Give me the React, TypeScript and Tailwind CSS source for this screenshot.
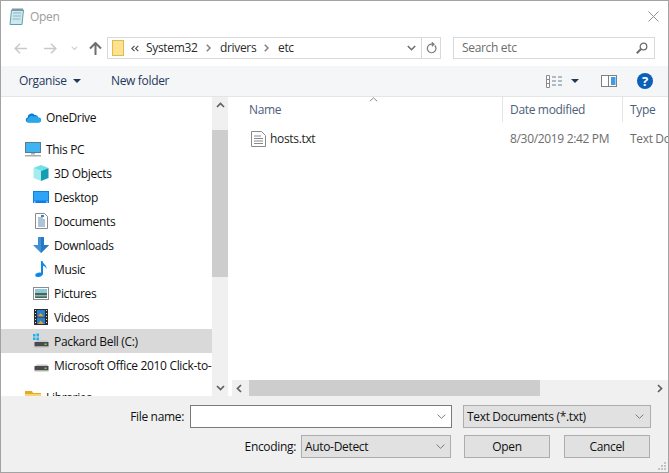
import React from "react";

const Row = ({ icon, label, indent, selected, mt }: { icon: React.ReactNode; label: string; indent: boolean; selected?: boolean; mt?: string }) => (
  <div className={`flex h-6 shrink-0 items-center whitespace-nowrap ${selected ? "bg-[#d9d9d9]" : ""} ${mt ?? ""} ${indent ? "pl-[32px]" : "pl-[24px]"}`}>
    <span className="flex h-4 w-4 shrink-0 items-center justify-center">{icon}</span>
    <span className="ml-[5px] pt-px">{label}</span>
  </div>
);

const Chevron = ({ className = "" }: { className?: string }) => (
  <svg width="9" height="5" viewBox="0 0 9 5" className={className}><path d="M.6.6 4.500 4.300 8.400.6" fill="none" stroke="#7a7a7a" strokeWidth="1" /></svg>
);

const Crumb = () => (
  <svg width="5" height="8" viewBox="0 0 5 8"><path d="M.8.8 4 4 .8 7.200" fill="none" stroke="#808080" strokeWidth="1.500" /></svg>
);

const OneDrive = () => (
  <svg width="16" height="11" viewBox="0 0 16 11"><path d="M3 10.500A2.600 2.600 0 0 1 2.600 5.400 4 4 0 0 1 9.600 3a3 3 0 0 1 3.600 2.600 2.500 2.500 0 0 1 .4 4.900Z" fill="#0f78d4" /><path d="M3 10.500a2.500 2.500 0 0 1 .6-4.600 3 3 0 0 1 5-1.200 3.200 3.200 0 0 1 4.400 1 2.400 2.400 0 0 1 1.600 4.800Z" fill="#28a8ea" /></svg>
);
const ThisPC = () => (
  <svg width="16" height="15" viewBox="0 0 16 15"><rect x=".5" y=".5" width="15" height="10" fill="#3fb4f2" stroke="#5a7a90" /><rect x="6" y="11" width="4" height="1.500" fill="#9fb2bf" /><rect y="13" width="16" height="1.500" fill="#a6adb3" /></svg>
);
const Cube = () => (
  <svg width="16" height="16" viewBox="0 0 16 16"><path d="M8 0 15.500 3 8 6 .5 3Z" fill="#6fe0e6" /><path d="M.5 3 8 6v10L.5 13Z" fill="#a5ecef" /><path d="M15.500 3 8 6v10l7.500-3Z" fill="#159eb2" /></svg>
);
const Desktop = () => (
  <svg width="16" height="12" viewBox="0 0 16 12"><rect width="16" height="12" fill="#0b7ee8" /><rect x="1" y="1" width="14" height="8.500" fill="#2fa3f5" /><rect x="1" y="10.500" width="1.500" height="1" fill="#fff" /><rect x="13" y="10.500" width="2" height="1" fill="#cfe8fb" /></svg>
);
const Docs = () => (
  <svg width="13" height="16" viewBox="0 0 13 16"><path d="M.5.500h9l3 3v12H.5Z" fill="#fff" stroke="#8a8a8a" /><path d="M3 5h5M3 7h7M3 9h7M3 11h7M3 13h7" stroke="#5f87a8" strokeWidth="1" /><path d="M6 2h3v2H6z" fill="#2a8ad4" /></svg>
);
const Down = () => (
  <svg width="16" height="16" viewBox="0 0 16 16"><path d="M5 0h6v8h5l-8 8-8-8h5Z" fill="#3d8fd8" /><path d="M8 0h3v8h5l-8 8Z" fill="#2b78c2" /></svg>
);
const Music = () => (
  <svg width="13" height="16" viewBox="0 0 13 16"><path d="M6 0h1.500c.3 3 4.500 4 4 8-.5-2-2.500-3-3.500-3.300V12.500C8 14.500 5.500 16 3 16 1 16 0 15 .3 13.700.7 12.200 3.500 11 6 11.700Z" fill="#0f86e6" /></svg>
);
const Pictures = () => (
  <svg width="16" height="13" viewBox="0 0 16 13"><rect x=".5" y=".5" width="15" height="12" fill="#fff" stroke="#8c8c8c" /><rect x="2" y="2" width="12" height="4" fill="#8fc8d8" /><rect x="2" y="6" width="12" height="5" fill="#3d6a5a" /><rect x="2" y="8" width="12" height="1.500" fill="#9ab0a8" /></svg>
);
const Videos = () => (
  <svg width="14" height="16" viewBox="0 0 14 16"><rect width="14" height="16" fill="#2c2c2c" /><rect x="3" y="1" width="8" height="6.500" fill="#2a7fd0" /><rect x="3" y="8.500" width="8" height="6.500" fill="#2a7fd0" /><path d="M4 7.500 6.500 4 10 7.500ZM4 15l2.500-3.500L10 15Z" fill="#e0a52c" /><path d="M1 1h1v1H1zM1 4h1v1H1zM1 7h1v1H1zM1 10h1v1H1zM1 13h1v1H1zM12 1h1v1h-1zM12 4h1v1h-1zM12 7h1v1h-1zM12 10h1v1h-1zM12 13h1v1h-1z" fill="#ddd" /></svg>
);
const Drive = ({ win }: { win?: boolean }) => (
  <svg width="16" height="16" viewBox="0 0 16 16" className="ml-[-1px]">
    {win && <path d="M0 1h2.500v2.500H0zM3.500 0.500H6v3H3.500zM0 4.500h2.500V7H0zM3.500 4.500H6V7.500H3.500z" fill="#18b0ee" />}
    <path d="M2.500 9 4 7.500h10l1.500 1.500Z" fill="#c9c9c9" />
    <rect x="1.500" y="9" width="14" height="4.500" fill="#4a4a4a" />
    <rect x="11.500" y="10.500" width="2" height="1.500" fill="#6fdc5a" />
    <rect x="1.500" y="13.500" width="14" height="1" fill="#b9b9b9" />
  </svg>
);
const Folder = () => (
  <svg width="16" height="12" viewBox="0 0 16 12"><path d="M0 0h7l1 2h8v10H0Z" fill="#e3a92c" /><rect y="3" width="16" height="9" fill="#fbd568" /></svg>
);

export default function App() {
  return (
    <div className="flex h-[473px] w-[669px] flex-col overflow-hidden border border-[#a3a3a3] bg-white text-[12px] leading-4 tracking-[-0.33px] text-[#111] [font-family:'Open_Sans','Noto_Sans',sans-serif]">
      {/* Title bar */}
      <div className="flex h-[31px] shrink-0 items-center pl-[8px] pr-[9px]">
        <svg width="16" height="17" viewBox="0 0 16 17"><path d="M2.500 2h12l-1.500 14.500H1Z" fill="#cfe8ee" stroke="#5f9fb4" /><path d="M4 5h8M4 8h8M3.500 11h8" stroke="#8ab6c6" /><path d="M3 .5h11V3H3Z" fill="#7c97a5" /></svg>
        <span className="ml-[5px] text-[#9c9c9c]">Open</span>
        <svg className="ml-auto" width="11" height="11" viewBox="0 0 11 11"><path d="M.5.500l10 10M10.500.5l-10 10" stroke="#8f8f8f" /></svg>
      </div>

      {/* Navigation */}
      <div className="flex h-[34px] shrink-0 items-start pl-[13px] pr-[13px] pt-[5px]">
        <div className="flex h-[22px] w-[93px] shrink-0 items-center">
          <svg width="13" height="11" viewBox="0 0 13 11"><path d="M6 .8 1.200 5.500 6 10.200M1.500 5.500H13" fill="none" stroke="#c9c9c9" strokeWidth="1.500" /></svg>
          <svg className="ml-[17px]" width="13" height="11" viewBox="0 0 13 11"><path d="M7 .8l4.800 4.700L7 10.200M11.500 5.500H0" fill="none" stroke="#c9c9c9" strokeWidth="1.500" /></svg>
          <svg className="ml-[14px]" width="7" height="5" viewBox="0 0 7 5"><path d="M.8.8 3.500 3.500 6.200.8" fill="none" stroke="#cfcfcf" strokeWidth="1.200" /></svg>
          <svg className="ml-[11px]" width="13" height="13" viewBox="0 0 13 13"><path d="M1 6.500 6.500 1 12 6.500M6.500 1.500V13" fill="none" stroke="#6e6e6e" strokeWidth="2" /></svg>
        </div>
        <div className="flex h-[22px] w-[334px] shrink-0 items-center border border-[#d9d9d9] text-[#2b2b2b]">
          <span className="ml-[4px] block h-[16px] w-[12px] shrink-0 border border-[#e0b94f] bg-[#fde38e]" />
          <svg className="ml-[7px]" width="8" height="7" viewBox="0 0 8 7"><path d="M3.500.8.800 3.500 3.500 6.200M7.300.8 4.600 3.500 7.300 6.200" fill="none" stroke="#555" strokeWidth="1.200" /></svg>
          <span className="ml-[7px] w-[50px] shrink-0">System32</span>
          <span className="ml-[10px]"><Crumb /></span>
          <span className="ml-[9px] w-[35px] shrink-0">drivers</span>
          <span className="ml-[9px]"><Crumb /></span>
          <span className="ml-[9px]">etc</span>
          <svg className="ml-auto mr-[5px]" width="9" height="6" viewBox="0 0 9 6"><path d="M.8 1 4.500 4.700 8.200 1" fill="none" stroke="#6e6e6e" strokeWidth="1.600" /></svg>
          <div className="flex h-full w-[19px] items-center justify-center border-l border-[#d9d9d9]">
            <svg width="11" height="12" viewBox="0 0 11 12"><path d="M8.800 3.500A4.300 4.300 0 1 1 5 2.200H7.500M5.800 .3 8 2.200 5.800 4.200" fill="none" stroke="#7a7a7a" strokeWidth="1.200" /></svg>
          </div>
        </div>
        <div className="ml-[12px] flex h-[22px] w-[202px] shrink-0 items-center border border-[#d9d9d9] pl-[8px] pr-[6px] text-[#6d6d6d]">
          <span>Search etc</span>
          <svg className="ml-auto" width="12" height="12" viewBox="0 0 12 12"><circle cx="7.500" cy="4.500" r="3.300" fill="none" stroke="#6e6e6e" strokeWidth="1.300" /><path d="M5 7 .8 11.200" stroke="#6e6e6e" strokeWidth="2" /></svg>
        </div>
      </div>

      {/* Toolbar */}
      <div className="flex h-[31px] shrink-0 items-center border-b border-[#e5e5e5] bg-[#f5f6f7] text-[#1e395b]">
        <span className="ml-[18px] w-[48px] shrink-0">Organise</span>
        <svg className="ml-[6px]" width="8" height="4" viewBox="0 0 8 4"><path d="M0 0h8L4 4Z" fill="#1e395b" /></svg>
        <span className="ml-[30px]">New folder</span>
        <svg className="ml-auto" width="16" height="13" viewBox="0 0 16 13"><path d="M.5.500h3v12h-3ZM.5 4.500h3M.5 8.500h3" fill="#fff" stroke="#8a8a8a" /><path d="M6 2h4M6 6h4M6 10h4M12 2h4M12 6h4M12 10h4" stroke="#6d7f90" /></svg>
        <svg className="ml-[9px]" width="8" height="4" viewBox="0 0 8 4"><path d="M0 0h8L4 4Z" fill="#1e395b" /></svg>
        <svg className="ml-[22px]" width="16" height="12" viewBox="0 0 16 12"><rect x=".5" y=".5" width="15" height="11" fill="#fff" stroke="#7f7f7f" /><rect x="10" y="2" width="4.500" height="8" fill="#3f9be8" /><path d="M7.500 1v10" stroke="#7f7f7f" /></svg>
        <span className="ml-[20px] mr-[15px] flex h-4 w-4 items-center justify-center rounded-full bg-[#0a5fb8] text-[13px] font-bold leading-none tracking-normal text-white">?</span>
      </div>

      {/* Main panes */}
      <div className="flex h-[299px] shrink-0">
        <div className="flex w-[211px] shrink-0 flex-col overflow-hidden whitespace-nowrap">
          <div className="h-[8px] shrink-0" />
          <Row indent={false} icon={<OneDrive />} label="OneDrive" />
          <Row indent={false} mt="mt-[8px]" icon={<ThisPC />} label="This PC" />
          <Row indent icon={<Cube />} label="3D Objects" />
          <Row indent icon={<Desktop />} label="Desktop" />
          <Row indent icon={<Docs />} label="Documents" />
          <Row indent icon={<Down />} label="Downloads" />
          <Row indent icon={<Music />} label="Music" />
          <Row indent icon={<Pictures />} label="Pictures" />
          <Row indent icon={<Videos />} label="Videos" />
          <Row indent selected icon={<Drive win />} label="Packard Bell (C:)" />
          <Row indent icon={<Drive />} label="Microsoft Office 2010 Click-to-Run" />
          <Row indent={false} mt="mt-[8px]" icon={<Folder />} label="Libraries" />
        </div>
        <div className="flex w-[16px] shrink-0 flex-col items-center bg-[#f0f0f0]">
          <svg className="mt-[5px]" width="9" height="6" viewBox="0 0 9 6"><path d="M1 5 4.500 1.500 8 5" fill="none" stroke="#606060" strokeWidth="1.700" /></svg>
          <div className="mt-[22px] h-[147px] w-full bg-[#cdcdcd]" />
          <svg className="mt-auto mb-[5px]" width="9" height="6" viewBox="0 0 9 6"><path d="M1 1 4.500 4.500 8 1" fill="none" stroke="#606060" strokeWidth="1.700" /></svg>
        </div>
        <div className="flex min-w-0 flex-1 flex-col pl-[4px]">
          <div className="flex h-[25px] shrink-0 text-[#4c607a]">
            <div className="relative flex w-[271px] shrink-0 items-center border-r border-[#e5e5e5] pl-[17px]">
              Name
              <svg className="absolute left-[137px] top-0" width="9" height="5" viewBox="0 0 9 5"><path d="M.8 4.300 4.500.8 8.200 4.300" fill="none" stroke="#8a8a8a" /></svg>
            </div>
            <div className="flex w-[120px] shrink-0 items-center border-r border-[#e5e5e5] pl-[7px]">Date modified</div>
            <div className="flex items-center pl-[7px]">Type</div>
          </div>
          <div className="mt-[8px] flex h-[18px] shrink-0 items-center whitespace-nowrap text-[#6d6d6d]">
            <div className="flex w-[271px] shrink-0 items-center pl-[19px] text-[#1f1f1f]">
              <svg width="15" height="16" viewBox="0 0 15 16"><path d="M.5.500h10l4 4v11H.5Z" fill="#fff" stroke="#8a8a8a" /><path d="M3 5h7M3 7.500h9M3 10h9M3 12.500h9" stroke="#8a8a8a" /></svg>
              <span className="ml-[4px]">hosts.txt</span>
            </div>
            <div className="w-[120px] shrink-0 pl-[7px]">8/30/2019 2:42 PM</div>
            <div className="overflow-hidden pl-[7px]">Text Document</div>
          </div>
          <div className="mt-auto flex h-[16px] shrink-0 items-center bg-[#f0f0f0]">
            <svg className="ml-[4px]" width="6" height="9" viewBox="0 0 6 9"><path d="M5 1 1.500 4.500 5 8" fill="none" stroke="#606060" strokeWidth="1.700" /></svg>
            <div className="ml-[7px] h-full w-[291px] bg-[#cdcdcd]" />
            <svg className="ml-auto mr-[5px]" width="6" height="9" viewBox="0 0 6 9"><path d="M1 1 4.500 4.500 1 8" fill="none" stroke="#606060" strokeWidth="1.700" /></svg>
          </div>
        </div>
      </div>

      {/* Bottom panel */}
      <div className="relative flex flex-1 flex-col bg-[#f0f0f0] text-[#111]">
        <div className="mt-[9px] flex h-[23px] items-center">
          <span className="w-[183px] text-right">File name:</span>
          <div className="ml-[6px] flex h-[23px] w-[262px] items-center justify-end border border-[#7a7a7a] bg-white pr-[5px]">
            <Chevron />
          </div>
          <div className="ml-[11px] flex h-[23px] w-[188px] items-center border border-[#adadad] bg-[#e1e1e1] pl-[3px] pr-[6px]">
            <span>Text Documents (*.txt)</span>
            <Chevron className="ml-auto" />
          </div>
        </div>
        <div className="mt-[7px] flex h-[23px] items-center">
          <span className="w-[295px] text-right">Encoding:</span>
          <div className="ml-[5px] flex h-[23px] w-[150px] items-center border border-[#adadad] bg-[#e1e1e1] pl-[3px] pr-[5px]">
            <span>Auto-Detect</span>
            <Chevron className="ml-auto" />
          </div>
          <div className="ml-[13px] flex h-[23px] w-[86px] items-center justify-center border border-[#adadad] bg-[#e1e1e1]">Open</div>
          <div className="ml-[14px] flex h-[23px] w-[86px] items-center justify-center border border-[#adadad] bg-[#e1e1e1]">Cancel</div>
        </div>
        <svg className="absolute bottom-[1px] right-[1px]" width="10" height="10" viewBox="0 0 10 10"><path d="M7 1h2v2H7zM4 4h2v2H4zM7 4h2v2H7zM1 7h2v2H1zM4 7h2v2H4zM7 7h2v2H7z" fill="#c4c4c4" /></svg>
      </div>
    </div>
  );
}
